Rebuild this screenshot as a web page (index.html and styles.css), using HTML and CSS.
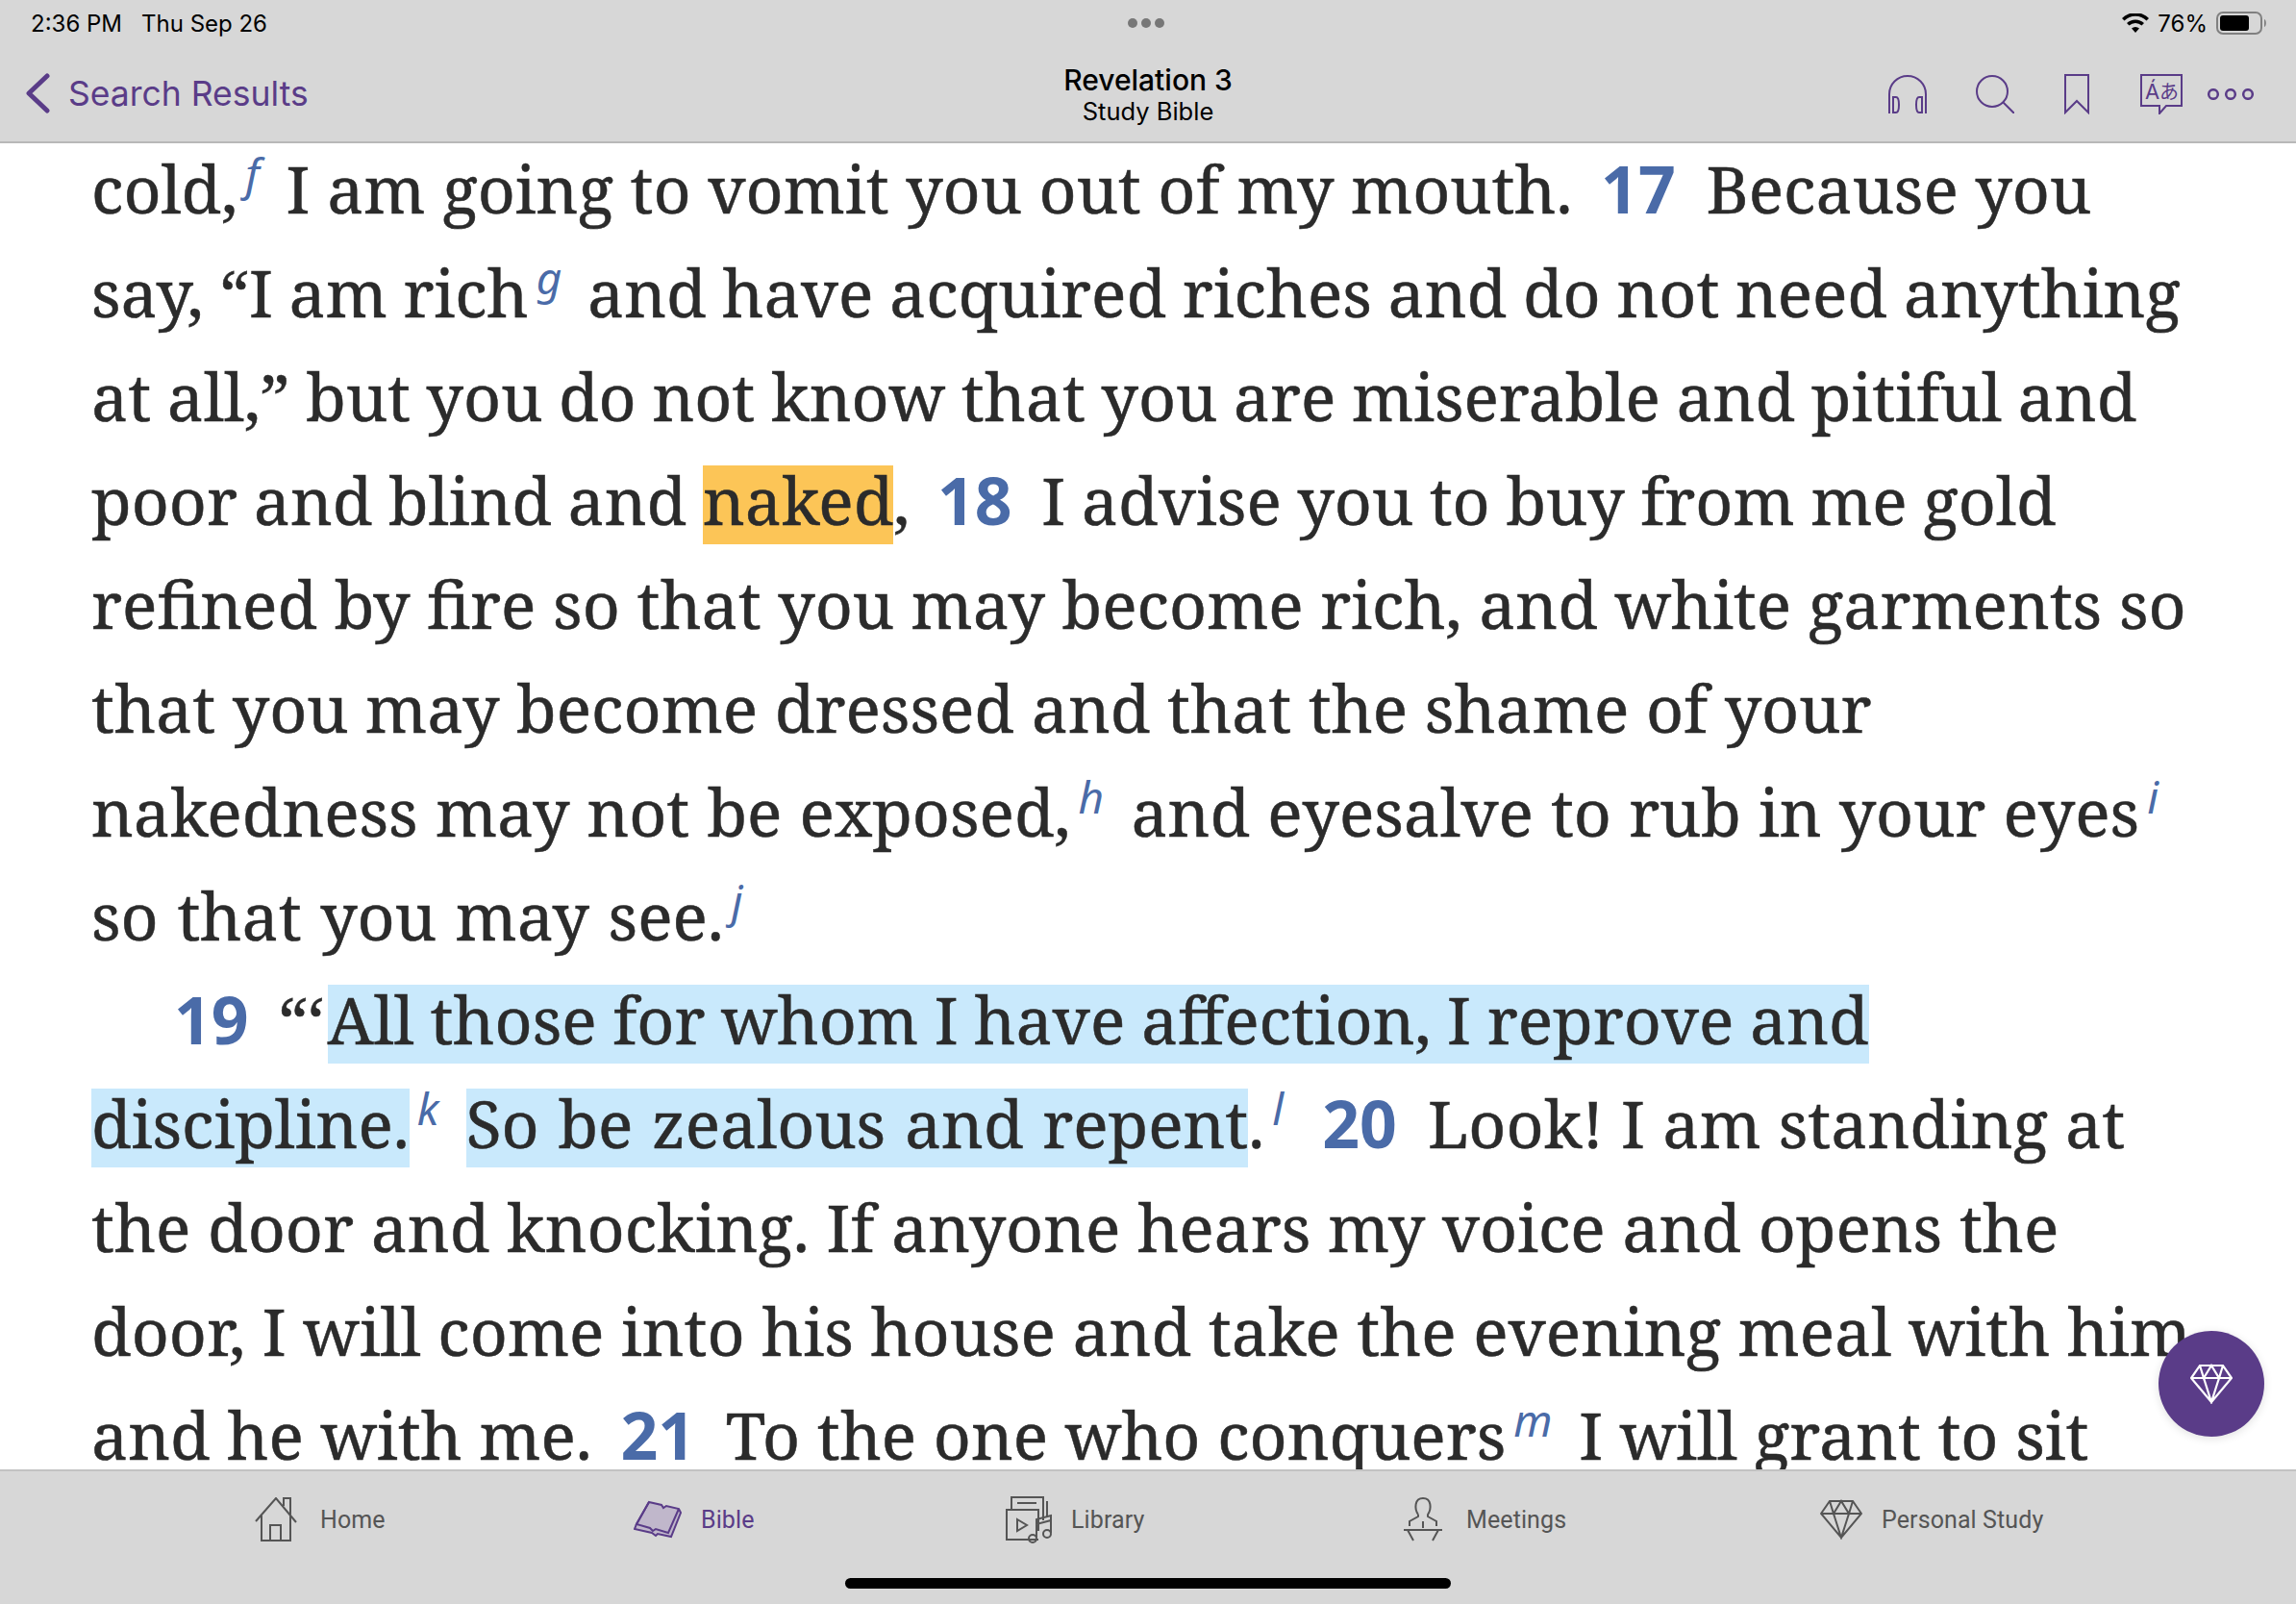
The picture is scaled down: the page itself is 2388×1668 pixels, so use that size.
FILE: index.html
```html
<!DOCTYPE html>
<html lang="en">
<head>
    <meta charset="UTF-8">
    <title>Revelation 3</title>
    <link rel="stylesheet" href="styles.css">
</head>
<body>
    <div class="status">
        <div class="status-left"><span>2:36 PM</span><span>Thu Sep 26</span></div>
        <div class="dots"><i></i><i></i><i></i></div>
        <div class="status-right">
            <svg width="28" height="20" viewBox="0 0 28 20"><path d="M14 20 10 15.500a6 6 0 0 1 8 0zM7.500 12.500 5 10a13 13 0 0 1 18 0l-2.500 2.500a9.500 9.500 0 0 0-13 0zM2.500 7.500 0 5a20 20 0 0 1 28 0l-2.500 2.500a16.500 16.500 0 0 0-23 0z" fill="#000"/></svg>
            <span>76%</span>
            <svg width="53" height="24" viewBox="0 0 53 24"><rect x="1" y="1" width="46" height="22" rx="6" fill="none" stroke="#808080" stroke-width="2"/><rect x="4" y="4" width="30" height="16" rx="3" fill="#000"/><path d="M50 8c2.500.8 2.500 7.200 0 8z" fill="#808080"/></svg>
        </div>
    </div>
    <header class="navbar">
        <div class="back">
            <svg width="26" height="42" viewBox="0 0 26 42"><path d="M23 3 4 21l19 18" fill="none" stroke="#5a3c88" stroke-width="5" stroke-linecap="round" stroke-linejoin="round"/></svg>
            <span>Search Results</span>
        </div>
        <div class="title"><b>Revelation 3</b><span>Study Bible</span></div>
        <div class="tools">
            <svg class="tool-head" width="40" height="40" viewBox="0 0 40 40" fill="none" stroke="#5a3c88" stroke-width="2"><path d="M1 40V20a19 19 0 0 1 38 0v20"/><path d="M5 23h3c4 0 4 16 0 16H5zM35 23h-3c-4 0-4 16 0 16h3z"/></svg>
            <svg class="tool-search" width="40" height="40" viewBox="0 0 40 40" fill="none" stroke="#5a3c88" stroke-width="2"><circle cx="17" cy="17" r="16"/><path d="m28 28 12 12"/></svg>
            <svg class="tool-mark" width="26" height="42" viewBox="0 0 26 42" fill="none" stroke="#5a3c88" stroke-width="2"><path d="M1 1h24v39L13 28 1 40z"/></svg>
            <svg class="tool-lang" width="44" height="42" viewBox="0 0 44 42" fill="none" stroke="#5a3c88" stroke-width="2"><path d="M1 1h42v32H27l-7 8v-8H1z"/><text x="5" y="26" class="lang-a">Á</text><text x="20" y="26" class="lang-b">あ</text></svg>
            <svg width="48" height="12" viewBox="0 0 48 12" fill="none" stroke="#5a3c88" stroke-width="2.500"><circle cx="6" cy="6" r="4.800"/><circle cx="24" cy="6" r="4.800"/><circle cx="42" cy="6" r="4.800"/></svg>
        </div>
    </header>
    <main class="reader">
        <p class="line">cold,<sup>f</sup> I am going to vomit you out of my mouth. <b class="vn">17</b> Because you</p>
        <p class="line tight">say, “I am rich<sup>g</sup> and have acquired riches and do not need anything</p>
        <p class="line tight">at all,” but you do not know that you are miserable and pitiful and</p>
        <p class="line tight">poor and blind and <mark class="orange">naked</mark>, <b class="vn">18</b> I advise you to buy from me gold</p>
        <p class="line">refined by fire so that you may become rich, and white garments so</p>
        <p class="line">that you may become dressed and that the shame of your</p>
        <p class="line loose">nakedness may not be exposed,<sup>h</sup> and eyesalve to rub in your eyes<sup>i</sup></p>
        <p class="line looser">so that you may see.<sup>j</sup></p>
        <p class="line indent tight"><b class="vn">19</b> “‘<mark>All those for whom I have affection, I reprove and</mark></p>
        <p class="line loose"><mark>discipline.</mark><sup>k</sup> <mark>So be zealous and repent</mark>.<sup>l</sup> <b class="vn">20</b> Look! I am standing at</p>
        <p class="line">the door and knocking. If anyone hears my voice and opens the</p>
        <p class="line">door, I will come into his house and take the evening meal with him</p>
        <p class="line">and he with me. <b class="vn">21</b> To the one who conquers<sup>m</sup> I will grant to sit</p>
    </main>
    <button class="fab">
        <svg width="44" height="42" viewBox="0 0 44 42" fill="none" stroke="#fff" stroke-width="2.200"><path d="M10 2h24l9 13-21 25L1 15zM1 15h42M14 15l8 25 8-25M10 2l4 13 8-13 8 13 4-13"/></svg>
    </button>
    <nav class="tabbar">
        <div class="tab tab-wide">
            <svg width="44" height="46" viewBox="0 0 44 46" fill="none" stroke="#555" stroke-width="2"><path d="M1 25 22 1l21 25M7 19v26h30V19M16 45V29h11v16M30 9V1h7v17"/></svg>
            <span>Home</span>
        </div>
        <div class="tab active">
            <svg width="50" height="40" viewBox="0 0 50 40" stroke="#5a3c88" stroke-width="2" fill="#c0b7cb"><path d="M16 2 29 5l2 3 3-2 13 3 2 4-10 25-14-3-2 2-4-3L1 30 3 25z"/><path d="M16 2 3 25l14 4 3 3 3-2 13 4 11-25" fill="none"/></svg>
            <span>Bible</span>
        </div>
        <div class="tab">
            <svg width="48" height="50" viewBox="0 0 48 50" fill="none" stroke="#555" stroke-width="2"><path d="M34 46H1V15h33v22M6 15V2h33v24M12 8h20M43 6v17"/><path d="m12 25 10 6-10 6z"/><path d="M32 44V25l15-4v18M32 30l15-4"/><circle cx="28" cy="45" r="4"/><circle cx="43" cy="40" r="4"/></svg>
            <span>Library</span>
        </div>
        <div class="tab tab-wide">
            <svg width="42" height="46" viewBox="0 0 42 46" fill="none" stroke="#555" stroke-width="2"><path d="M16 18c-4-6-4-17 5-17s9 11 5 17v2l9 5v5M16 18v2l-9 5v5M21 25v7M1 34h40M5 34l6 11M37 34l-6 11"/></svg>
            <span>Meetings</span>
        </div>
        <div class="tab">
            <svg width="44" height="42" viewBox="0 0 44 42" fill="none" stroke="#555" stroke-width="2"><path d="M10 2h24l9 13-21 25L1 15zM1 15h42M14 15l8 25 8-25M10 2l4 13 8-13 8 13 4-13"/></svg>
            <span>Personal Study</span>
        </div>
    </nav>
    <div class="home-bar"></div>
</body>
</html>
```

FILE: styles.css
```css
html, body {
    margin: 0;
    height: 100%;
}

body {
    width: 2388px;
    height: 1668px;
    overflow: hidden;
    position: relative;
    display: flex;
    flex-direction: column;
    font-family: Inter, "Noto Sans", sans-serif;
    background-color: #fff;
    color: #000;
}

.status {
    height: 48px;
    display: flex;
    align-items: center;
    justify-content: space-between;
    padding: 0 30px 0 32px;
    background-color: #d7d7d7;
    font-size: 24px;
    position: relative;
}

.status-left, .status-right {
    display: flex;
    align-items: center;
}

.status-left {
    gap: 20px;
}

.status-right {
    gap: 9px;
}

.dots {
    display: flex;
    gap: 4px;
    position: absolute;
    left: 1173px;
}

.dots i {
    width: 10px;
    height: 10px;
    border-radius: 50%;
    background-color: #777;
}

.navbar {
    height: 101px;
    box-sizing: border-box;
    display: grid;
    grid-template-columns: 1fr auto 1fr;
    align-items: center;
    padding: 0 44px 4px;
    background-color: #d7d7d7;
    border-bottom: 2px solid #b8b8b8;
}

.back {
    display: flex;
    align-items: center;
    gap: 19px;
    margin: 3px 0 0 -18px;
    color: #5a3c88;
    font-size: 35.500px;
}

.title {
    display: flex;
    flex-direction: column;
    align-items: center;
    font-size: 25.500px;
    padding-top: 4px;
}

.title b {
    font-weight: 500;
    font-size: 30px;
    margin-bottom: -1px;
}

.tools {
    display: flex;
    align-items: center;
    justify-content: flex-end;
    padding-top: 4px;
}

.tool-head {
    margin-right: 51px;
}

.tool-search {
    margin-right: 52px;
}

.tool-mark {
    margin-right: 53px;
}

.tool-lang {
    margin-right: 26px;
}

.lang-a {
    font-size: 22px;
    fill: #5a3c88;
    stroke: none;
}

.lang-b {
    font-family: "Noto Sans CJK JP", sans-serif;
    font-size: 20px;
    fill: #5a3c88;
    stroke: none;
}

.reader {
    height: 1379px;
    box-sizing: border-box;
    padding-left: 95px;
    overflow: hidden;
    background-color: #fff;
    font-family: "Noto Serif", "DejaVu Serif", "Liberation Serif", serif;
    color: #2b2b2b;
    font-size: 67.900px;
    -webkit-text-stroke: 0.5px #2b2b2b;
}

.line {
    margin: 0;
    height: 108px;
    line-height: 94px;
    white-space: nowrap;
}

.tight {
    word-spacing: -1px;
}

.loose {
    word-spacing: 0.5px;
}

.loose mark {
    word-spacing: 2px;
}

.looser {
    word-spacing: 2px;
}

.indent {
    padding-left: 86px;
}

.vn {
    color: #4a6ba8;
    font-family: "Noto Sans", sans-serif;
    font-weight: 700;
    margin: 0 14px 0 12px;
    -webkit-text-stroke: 0;
}

.indent .vn {
    margin-left: 0;
}

.indent mark {
    margin-left: 4px;
}

sup {
    font-family: "Noto Sans", sans-serif;
    font-style: italic;
    font-size: 46px;
    color: #4a6ba8;
    line-height: 0;
    margin: 0 10px 0 8px;
    -webkit-text-stroke: 0;
}

mark {
    color: inherit;
    padding-bottom: 2px;
    background: linear-gradient(#c9e9fc, #c9e9fc) no-repeat 0 11px / 100% 82px;
}

mark.orange {
    background-image: linear-gradient(#fcc557, #fcc557);
}

.fab {
    position: absolute;
    left: 2245px;
    top: 1384px;
    width: 110px;
    height: 110px;
    border: none;
    border-radius: 50%;
    background-color: #5a3c88;
    box-shadow: 0 2px 10px rgba(0, 0, 0, 0.12);
    display: flex;
    align-items: center;
    justify-content: center;
}

.tabbar {
    flex: 1;
    display: grid;
    grid-template-columns: 394px 387px 413px 434px auto;
    align-content: start;
    background-color: #d7d7d7;
    border-top: 2px solid #c2c2c2;
    padding: 25px 0 0 265px;
    color: #555;
    font-family: Roboto, sans-serif;
    font-size: 25px;
    letter-spacing: 0.1px;
}

.tab {
    display: flex;
    align-items: center;
    gap: 20px;
    height: 50px;
}

.tab-wide {
    gap: 24px;
}

.tab.active {
    color: #5a3c88;
}

.home-bar {
    position: absolute;
    left: 879px;
    top: 1641px;
    width: 630px;
    height: 11px;
    border-radius: 6px;
    background-color: #000;
}
```
